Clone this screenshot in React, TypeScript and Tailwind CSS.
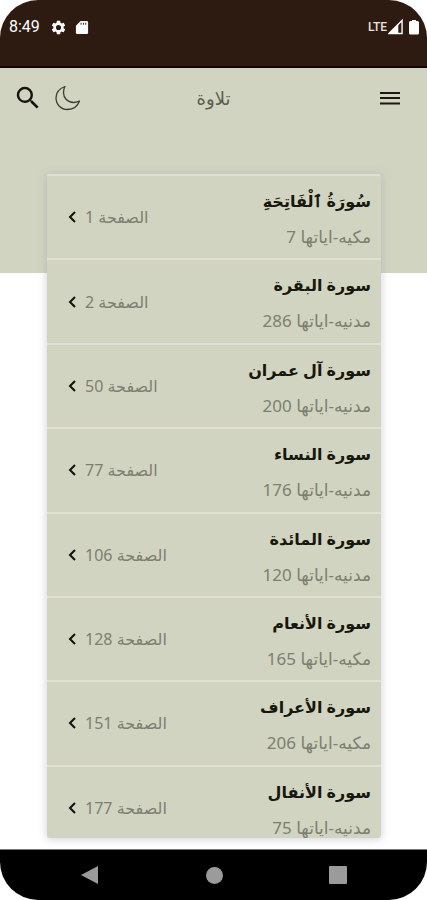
import React from "react";

type Surah = { name: string; details: string; page: number };

const surahs: Surah[] = [
  { name: "سُورَةُ ٱلْفَاتِحَةِ", details: "مكيه-اياتها 7", page: 1 },
  { name: "سورة البقرة", details: "مدنيه-اياتها 286", page: 2 },
  { name: "سورة آل عمران", details: "مدنيه-اياتها 200", page: 50 },
  { name: "سورة النساء", details: "مدنيه-اياتها 176", page: 77 },
  { name: "سورة المائدة", details: "مدنيه-اياتها 120", page: 106 },
  { name: "سورة الأنعام", details: "مكيه-اياتها 165", page: 128 },
  { name: "سورة الأعراف", details: "مكيه-اياتها 206", page: 151 },
  { name: "سورة الأنفال", details: "مدنيه-اياتها 75", page: 177 },
];

function StatusBar() {
  return (
    <div
      dir="ltr"
      className="flex h-[68px] shrink-0 items-start justify-between border-b-2 border-[#120504] bg-[#2d1b12] pt-[18px] pr-2 pl-[9px] font-['Roboto',sans-serif] text-white"
    >
      <div className="flex h-[18px] items-center">
        <span className="w-[41px] text-base leading-[18px]">8:49</span>
        <svg viewBox="0 0 24 24" className="size-[17px]" fill="currentColor" aria-hidden="true">
          <path d="M19.14 12.94c.04-.3.06-.61.06-.94s-.02-.64-.07-.94l2.03-1.58a.5.5 0 0 0 .12-.61l-1.92-3.32a.49.49 0 0 0-.59-.22l-2.39.96a7 7 0 0 0-1.62-.94l-.36-2.54a.48.48 0 0 0-.48-.41h-3.84a.47.47 0 0 0-.47.41l-.36 2.54c-.59.24-1.13.57-1.62.94l-2.39-.96a.48.48 0 0 0-.59.22L2.74 8.87a.47.47 0 0 0 .12.61l2.03 1.58c-.05.3-.09.63-.09.94s.02.64.07.94l-2.03 1.58a.5.5 0 0 0-.12.61l1.92 3.32c.12.22.37.29.59.22l2.39-.96c.5.38 1.03.7 1.62.94l.36 2.54c.05.24.24.41.48.41h3.84c.24 0 .44-.17.47-.41l.36-2.54a6.900 6.900 0 0 0 1.620-.94l2.39.96c.22.08.47 0 .59-.22l1.920-3.320a.47.47 0 0 0-.12-.61zM12 15.600a3.600 3.600 0 1 1 0-7.200 3.600 3.600 0 0 1 0 7.200" />
        </svg>
        <svg viewBox="0 0 14 16" className="ml-[8px] h-[15px] w-[14px]" fill="currentColor" aria-hidden="true">
          <path
            fillRule="evenodd"
            d="M5.500 1H12a1.500 1.500 0 0 1 1.500 1.500v11A1.500 1.500 0 0 1 12 15H2a1.500 1.500 0 0 1-1.500-1.500V6zM5.500 3v2h1V3zM8 3v2h1V3zM10.500 3v2h1V3z"
          />
        </svg>
      </div>
      <div className="flex h-[18px] items-center">
        <span className="text-xs leading-[18px] font-medium text-[#e8e2df]">LTE</span>
        <svg viewBox="0 0 16 16" className="ml-[1px] h-[16px] w-[15px]" aria-hidden="true">
          <path d="M15 1v14H1z" fill="none" stroke="white" strokeWidth="1.500" />
          <path d="M11 5v10H1z" fill="white" />
        </svg>
        <svg viewBox="0 0 10 16" className="ml-[6px] h-[16px] w-[10px]" fill="white" aria-hidden="true">
          <path d="M3 1h4v1h1.500A1.500 1.500 0 0 1 10 3.500V14a1.500 1.500 0 0 1-1.500 1.500h-7A1.500 1.500 0 0 1 0 14V3.500A1.500 1.500 0 0 1 1.500 2H3z" />
        </svg>
      </div>
    </div>
  );
}

function Header() {
  return (
    <header dir="ltr" className="h-[205px] shrink-0 bg-[#d1d4c0]">
      <div className="grid h-[60px] grid-cols-3 items-center">
        <div className="flex items-center pl-[13px]">
          <button type="button" aria-label="بحث" className="flex w-[41px]">
            <svg viewBox="0 0 24 24" className="size-[30px]" fill="#16140e" aria-hidden="true">
              <path d="M15.500 14h-.79l-.28-.27A6.470 6.470 0 0 0 16 9.500 6.500 6.500 0 1 0 9.500 16c1.610 0 3.090-.59 4.230-1.570l.27.28v.79l5 4.990L20.490 19zm-6 0C7.010 14 5 11.990 5 9.500S7.010 5 9.500 5 14 7.010 14 9.500 11.990 14 9.500 14" />
            </svg>
          </button>
          <button type="button" aria-label="الوضع الليلي" className="flex">
            <svg viewBox="0 0 28 28" className="size-[28px]" fill="none" stroke="#3c3b30" strokeWidth="1.300" strokeLinejoin="round" aria-hidden="true">
              <path d="M11 2.500C5.500 4.500 2 8.500 2 14c0 6.500 5 11.500 11.500 11.500 5.500 0 10-3 12-8.500-2 1-4 1.500-6 1.500C13.500 18.500 9.500 14 9.500 8.500c0-2 .5-4.500 1.500-6z" />
            </svg>
          </button>
        </div>
        <h1 dir="rtl" className="text-center text-lg leading-6 text-[#5c5d50]">تلاوة</h1>
        <button type="button" aria-label="القائمة" className="mr-[22px] flex justify-self-end">
          <svg viewBox="0 0 30 30" className="size-[30px]" stroke="#1e160f" strokeWidth="2" aria-hidden="true">
            <path d="M5 10h20M5 15h20M5 20.500h20" />
          </svg>
        </button>
      </div>
    </header>
  );
}

function SurahRow({ surah }: { surah: Surah }) {
  return (
    <li className="border-t-2 border-[#e0e1d3]">
      <a href={`#page-${surah.page}`} className="flex h-full items-center justify-between pr-[10px] pl-[18px]">
        <div className="flex h-full flex-col pt-[9px]">
          <h2 className="text-base leading-8 font-bold whitespace-nowrap text-[#17170f]">{surah.name}</h2>
          <p className="pt-1 text-[17px] leading-8 whitespace-nowrap text-[#7d7f71]">{surah.details}</p>
        </div>
        <div className="flex items-center justify-end">
          <span className="text-base leading-6 whitespace-nowrap text-[#7d7f71]">الصفحة {surah.page}</span>
          <svg viewBox="0 0 14 14" className="mr-[6px] size-[14px] shrink-0" fill="none" stroke="#11110b" strokeWidth="2" aria-hidden="true">
            <path d="M10 2 5 7l5 5" />
          </svg>
        </div>
      </a>
    </li>
  );
}

function NavigationBar() {
  return (
    <nav dir="ltr" className="flex h-[51px] shrink-0 items-center justify-between border-t border-[#777] bg-black px-[80px]">
      <button type="button" aria-label="رجوع" className="flex">
        <svg viewBox="0 0 20 20" className="size-[20px]" fill="#9b9b9b" aria-hidden="true">
          <path d="M18 1v18L1 10z" />
        </svg>
      </button>
      <button type="button" aria-label="الرئيسية" className="size-[17px] rounded-full bg-[#9b9b9b]" />
      <button type="button" aria-label="التطبيقات الأخيرة" className="size-[18px] rounded-[1px] bg-[#9b9b9b]" />
    </nav>
  );
}

export default function App() {
  return (
    <div dir="rtl" className="h-screen bg-white font-['Noto_Sans','DejaVu_Sans',sans-serif]">
      <div className="flex h-full flex-col overflow-hidden rounded-[38px] bg-white">
        <StatusBar />
        <Header />
        <main className="-mt-[99px] mr-[46px] mb-[11px] ml-[47px] min-h-0 flex-1 overflow-hidden rounded-[3px] bg-[#d1d4c0] shadow-[0_1px_8px_rgba(160,160,180,0.5)]">
          <ul className="grid h-[675px] grid-rows-8">
            {surahs.map((surah) => (
              <SurahRow key={surah.page} surah={surah} />
            ))}
          </ul>
        </main>
        <NavigationBar />
      </div>
    </div>
  );
}
